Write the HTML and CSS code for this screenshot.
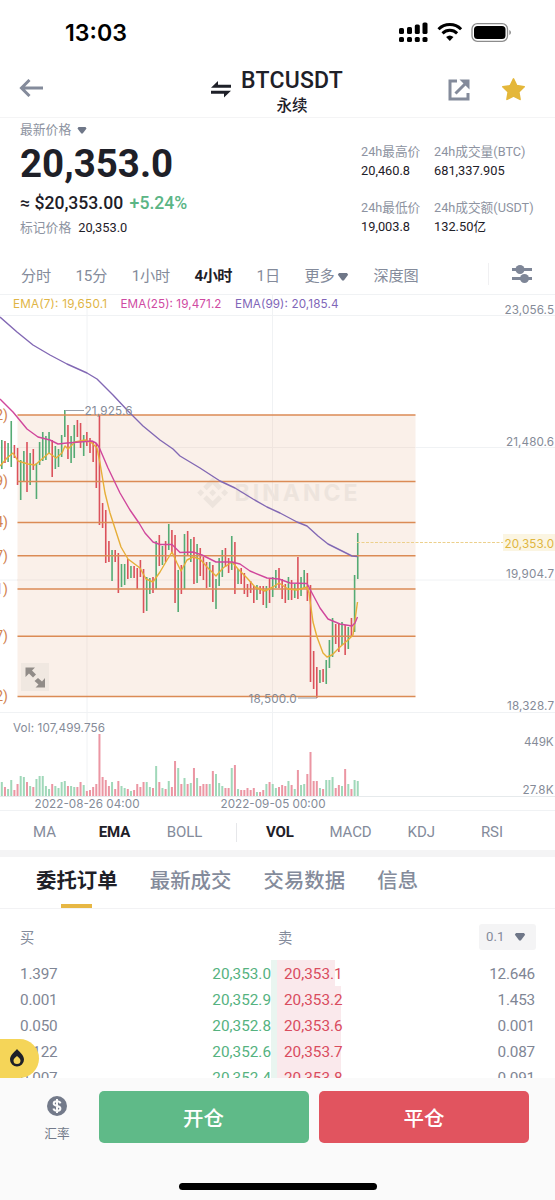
FILE: index.html
```html
<!DOCTYPE html>
<html lang="zh-CN">
<head>
  <meta charset="UTF-8">
  <meta name="viewport" content="width=device-width, initial-scale=1.0">
  <title>BTCUSDT 永续</title>
  <link rel="stylesheet" href="styles.css">
</head>
<body>
  <div class="app">
    <div class="status-bar">
      <span class="time">13:03</span>
      <svg class="status-icons" width="116" height="22" viewBox="0 0 116 22">
        <g>
          <rect x="1" y="8" width="5" height="6" rx="1.6"/><rect x="9" y="7" width="5" height="7" rx="1.6"/>
          <rect x="16.800" y="4.500" width="5" height="9.500" rx="1.600"/><rect x="24.500" y="2.500" width="5" height="11.500" rx="1.600"/>
          <rect x="1" y="17" width="5" height="5" rx="1.6"/><rect x="9" y="17" width="5" height="5" rx="1.6"/>
          <rect x="16.800" y="17" width="5" height="5" rx="1.6"/><rect x="24.500" y="17" width="5" height="5" rx="1.6"/>
        </g>
        <g fill="none" stroke="#000" stroke-width="3">
          <path d="M40.500 9.200a16 16 0 0 1 22.600 0"/>
          <path d="M44.500 13.300a10.500 10.500 0 0 1 14.600 0"/>
        </g>
        <path d="M51.800 21l-3.700-3.900a5.600 5.600 0 0 1 7.400 0z"/>
        <rect x="74" y="3.700" width="35.500" height="17.600" rx="5.300" fill="none" stroke="#8c8c8c" stroke-width="1.300"/>
        <rect x="76" y="6" width="31.500" height="13" rx="3.500"/>
        <path d="M111.300 10v5a2.700 2.700 0 0 0 0-5z" fill="#8c8c8c"/>
      </svg>
    </div>

    <div class="header">
      <svg class="back" width="24" height="18" viewBox="0 0 24 18"><path d="M24 9H3M10.500 1L2.500 9l8 8" fill="none" stroke="#848b9b" stroke-width="3"/></svg>
      <svg class="swap" width="20" height="18" viewBox="0 0 20 18"><path d="M0 7.700L7 1v3.700h13v3zM0 10.700h20L13 17.500v-3.800H0z" fill="#1e2028"/></svg>
      <div class="pair">
        <h1>BTCUSDT</h1>
        <span>永续</span>
      </div>
      <svg class="share" width="22" height="22" viewBox="0 0 22 22"><path d="M9 2H2v18h18v-6" fill="none" stroke="#848b9b" stroke-width="3"/><path d="M7.500 14.500L17 5" stroke="#848b9b" stroke-width="3"/><path d="M11.500.5H21.500V10.500z" fill="#848b9b"/></svg>
      <svg class="star" width="25" height="25" viewBox="0 0 24 24"><path d="M12 1.800l3.100 6.500 7.200 1-5.200 5 1.200 7.200-6.300-3.300-6.300 3.300 1.200-7.200-5.200-5 7.200-1z" fill="#e4b73a" stroke="#e4b73a" stroke-width="1.500" stroke-linejoin="round"/></svg>
    </div>

    <div class="info">
      <div class="price-box">
        <div class="label">最新价格 <svg width="10" height="7" viewBox="0 0 10 7"><path d="M1.500 0h7L9.500 1.500 5.700 6.500H4.300L.5 1.500z" fill="#6f7788"/></svg></div>
        <div class="price">20,353.0</div>
        <div class="usd">≈ $20,353.00 <span class="up">+5.24%</span></div>
        <div class="mark"><span>标记价格</span>20,353.0</div>
      </div>
      <div class="stats">
        <div class="stat"><span>24h最高价</span><b>20,460.8</b></div>
        <div class="stat"><span>24h成交量(BTC)</span><b>681,337.905</b></div>
        <div class="stat"><span>24h最低价</span><b>19,003.8</b></div>
        <div class="stat"><span>24h成交额(USDT)</span><b>132.50亿</b></div>
      </div>
    </div>

    <div class="intervals">
      <span>分时</span>
      <span>15分</span>
      <span>1小时</span>
      <span class="active">4小时</span>
      <span>1日</span>
      <span class="more">更多 <svg width="12" height="8" viewBox="0 0 10 7"><path d="M1.500 0h7L9.500 1.500 5.700 6.500H4.300L.5 1.500z" fill="#6f7788"/></svg></span>
      <span>深度图</span>
      <div class="settings">
        <svg width="20" height="20" viewBox="0 0 20 20" fill="#7e8697"><rect y="4" width="20" height="3"/><rect y="13" width="20" height="3"/><circle cx="8" cy="5.500" r="4.500"/><circle cx="12.500" cy="14.500" r="4.500"/></svg>
      </div>
    </div>

    <svg class="chart" width="555" height="517" viewBox="0 294 555 517">
      <path class="grid" d="M0 294.500H555M0 315.500H555M0 447.500H555M0 580H555M0 712.500H555M0 810.500H555M87 294V796M272.500 294V796"/>
      <path class="axis" d="M0 796.500H555"/>
      <rect class="fib-area" x="17.500" y="415" width="398" height="281"/>
      <g class="watermark">
        <path transform="translate(197.200 477.200) scale(1.290)" d="M16.624 13.920l2.718 2.716-7.353 7.353-7.353-7.352 2.717-2.717 4.636 4.660 4.635-4.660zm4.637-4.636L24 12l-2.715 2.716L18.568 12l2.693-2.716zm-9.272 0l2.716 2.692-2.717 2.717L9.272 12l2.716-2.715zm-9.273 0L5.409 12l-2.692 2.692L0 12l2.716-2.716zM11.989.011l7.353 7.329-2.718 2.716-4.635-4.636-4.636 4.660-2.717-2.716 7.353-7.353z"/>
        <text x="234.500" y="501" textLength="123">BINANCE</text>
      </g>
      <path class="grid over" d="M17 447.500H415M17 580H415M87 415V696M272.500 415V696"/>
      <g id="volumes"></g>
      <g id="candles"></g>
      <path class="fib" d="M17.500 415H415.500M17.500 481.400H415.500M17.500 522.400H415.500M17.500 555.700H415.500M17.500 589H415.500M17.500 636.200H415.500M17.500 696.400H415.500"/>
      <polyline class="ema99" points="0,317 17,332 33,345 50,355 67,364 87,373 97,379 113,395 128,411 143,426 160,440 173,449 180,456 200,468 220,481 235,488 253,499 267,507 280,513 297,522 307,526 318,536 328,544 340,550 352,556 357.500,556.500"/>
      <polyline class="ema7" points="0,466 7,458 13,453 18,461 28,464 35,465 42,459 49,453 56,458 62,453 65,446 68,449 75,442 85,440 92,443 97,448 100,463 105,493 110,513 121,547 128,559 140,568 146,579 153,582 160,572 167,560 172,552 177,563 181,571 187,560 193,557 200,559 207,567 216,576 223,568 232,562 238,569 247,578 255,587 265,591 273,587 279,583 288,589 297,590 307,587 309,593 313,622 317,637 323,653 327,657 332,655 340,647 348,640 353,635 355,620 357.500,602"/>
      <polyline class="ema25" points="0,399 13,412 27,429 38,437 50,440 58,444 67,443 80,442 92,441 96,443 99,447 108,468 120,493 130,510 139,523 145,533 153,542 160,544.500 172,544.500 180,552.500 193,552 202,555 216,562 232,562 240,564 250,571 267,578 279,579 290,583 307,583.500 312,593 320,608 328,619 340,624 352,626 355,623 357.500,617"/>
      <path class="price-line" d="M357 542.500H503"/>
      <rect class="price-tag" x="503" y="534" width="52" height="17"/>
      <path class="pointer" d="M65 410.500H84M298 698H317"/>
      <g class="fib-label">
        <text x="8" y="419.500">2)</text>
        <text x="8" y="486">9)</text>
        <text x="8" y="527">4)</text>
        <text x="8" y="560.500">7)</text>
        <text x="8" y="593.500">1)</text>
        <text x="8" y="641">7)</text>
        <text x="8" y="701">2)</text>
      </g>
      <g class="ema-label">
        <text x="13" y="308.300" textLength="94" fill="#dfb545">EMA(7): 19,650.1</text>
        <text x="120.500" y="308.300" textLength="101" fill="#cf4aa2">EMA(25): 19,471.2</text>
        <text x="235" y="308.300" textLength="103.500" fill="#7f66b8">EMA(99): 20,185.4</text>
      </g>
      <g class="tick">
        <text x="504.500" y="313.500" textLength="49.500">23,056.5</text>
        <text x="506" y="445.600" textLength="48">21,480.6</text>
        <text x="504.500" y="548.200" textLength="49.500" class="last">20,353.0</text>
        <text x="506" y="578" textLength="48">19,904.7</text>
        <text x="507" y="710" textLength="47">18,328.7</text>
        <text x="524" y="745.600" textLength="29.500">449K</text>
        <text x="522.500" y="793.700" textLength="31">27.8K</text>
        <text x="84.500" y="415" textLength="48">21,925.6</text>
        <text x="248.500" y="703" textLength="48">18,500.0</text>
        <text x="13" y="731.500" textLength="92">Vol: 107,499.756</text>
        <text x="34.500" y="808" textLength="105">2022-08-26 04:00</text>
        <text x="220.500" y="808" textLength="105">2022-09-05 00:00</text>
      </g>
      <rect x="21" y="663" width="28" height="28" fill="#f0e8e1"/>
      <path d="M25.500 667.500h9.500l-3 3 4 4-3 3-4-4-3.500 3.500zM45 687.500h-9.500l3-3-4-3.500 3.500-3 4 3.500 3-3.500z" fill="#918c88"/>
    </svg>

    <div class="indicators">
      <span>MA</span>
      <span class="active">EMA</span>
      <span>BOLL</span>
      <i></i>
      <span class="active">VOL</span>
      <span>MACD</span>
      <span>KDJ</span>
      <span>RSI</span>
    </div>

    <div class="tabs">
      <span class="active">委托订单</span>
      <span>最新成交</span>
      <span>交易数据</span>
      <span>信息</span>
    </div>

    <div class="book">
      <div class="book-head">
        <span>买</span>
        <span>卖</span>
        <div class="step">0.1 <svg width="12" height="8" viewBox="0 0 10 7"><path d="M1.500 0h7L9.500 1.500 5.700 6.500H4.300L.5 1.500z" fill="#6f7788"/></svg></div>
      </div>
      <div id="rows"></div>
      <div class="hot">
        <svg width="16" height="18" viewBox="0 0 16 18"><path d="M8 0c2.500 3 7 6 7 10.500a7 7 0 0 1-14 0C1 6 5.500 3 8 0zm0 7c-1.300 1.500-3.500 2.500-3.500 4.600a3.500 3.500 0 0 0 7 0C11.500 9.500 9.300 8.500 8 7z" fill="#1e2028" fill-rule="evenodd"/></svg>
      </div>
    </div>

    <div class="footer">
      <div class="rate">
        <svg width="20" height="20" viewBox="0 0 20 20"><circle cx="10" cy="10" r="10" fill="#737a8a"/><path d="M13.500 7.300C13 5.900 11.700 5.300 10 5.300c-2 0-3.300.9-3.300 2.300 0 3.300 6.700 1.500 6.700 4.800 0 1.500-1.400 2.400-3.400 2.400-1.900 0-3.200-.8-3.600-2.300M10 3v14" fill="none" stroke="#fafafa" stroke-width="2"/></svg>
        <span>汇率</span>
      </div>
      <button class="open-btn">开仓</button>
      <button class="close-btn">平仓</button>
      <div class="home-bar"></div>
    </div>
  </div>
  <script src="script.js"></script>
</body>
</html>
```

FILE: styles.css
```css
* {
  margin: 0;
  padding: 0;
  box-sizing: border-box;
}

body {
  background-color: #fff;
  font-family: Roboto, "Noto Sans CJK SC", sans-serif;
  color: #1e2028;
}

svg {
  flex-shrink: 0;
}

.app {
  width: 555px;
  height: 1200px;
  overflow: hidden;
  white-space: nowrap;
}

.status-bar {
  height: 59px;
  display: flex;
  justify-content: space-between;
  padding: 20px 41px 0 65px;
}

.time {
  font-family: Inter, sans-serif;
  font-size: 23.2px;
  font-weight: 600;
  line-height: 27px;
  color: #000;
}

.header {
  height: 59px;
  display: flex;
  align-items: flex-start;
  border-bottom: 1px solid #f4f4f5;
  padding-left: 19px;
}

.back {
  margin-top: 20px;
}

.swap {
  margin: 21px 10px 0 168px;
}

.pair {
  width: 102px;
  text-align: center;
  padding-top: 8px;
}

.pair h1 {
  font-size: 23px;
  font-weight: 500;
  line-height: 28px;
  letter-spacing: 0.2px;
}

.pair span {
  display: block;
  font-size: 15.5px;
  font-weight: 500;
  line-height: 22px;
}

.share {
  margin: 20px 31px 0 105px;
}

.star {
  margin-top: 18px;
}

.info {
  height: 137px;
  display: flex;
}

.price-box {
  width: 361px;
  padding-left: 20px;
}

.label {
  font-size: 12.8px;
  line-height: 23px;
  color: #8d93a1;
}

.label svg {
  margin-left: 3px;
}

.price {
  font-size: 38.5px;
  font-weight: 700;
  line-height: 46px;
}

.usd {
  font-size: 17.6px;
  font-weight: 500;
  line-height: 33px;
}

.up {
  color: #5bb585;
  margin-left: 2px;
}

.mark {
  font-size: 12.8px;
  line-height: 15px;
}

.mark span {
  color: #8d93a1;
  margin-right: 7px;
}

.stats {
  display: grid;
  grid-template-columns: 73px auto;
  grid-template-rows: 56px 56px;
  padding-top: 24px;
}

.stat span {
  display: block;
  font-size: 12.7px;
  line-height: 19px;
  color: #8d93a1;
}

.stat b {
  display: block;
  font-size: 12.8px;
  font-weight: 400;
  line-height: 20px;
}

.intervals {
  height: 39px;
  display: flex;
  align-items: center;
  gap: 24.5px;
  padding: 0 0 1px 21px;
  font-size: 15.2px;
  letter-spacing: -0.2px;
  color: #848b9b;
}

.intervals .active {
  color: #1e2028;
  font-weight: 700;
  letter-spacing: -0.5px;
}

.more svg {
  margin-left: -1px;
}

.settings {
  margin-left: auto;
  display: flex;
  align-items: center;
  height: 22px;
  width: 67px;
  padding-left: 23px;
  border-left: 1px solid #f0f0f2;
}

/* K线图 */
.chart {
  display: block;
}

.grid {
  fill: none;
  stroke: #f0f2f4;
  stroke-width: 1;
}

.grid.over {
  stroke: #efe5df;
}

.axis {
  stroke: #e6eaec;
}

.fib-area {
  fill: #faf0e9;
}

.fib {
  stroke: #db8b55;
  stroke-width: 1.5;
}

.fib-label text {
  font-family: Roboto, sans-serif;
  font-size: 14px;
  fill: #d2824f;
  text-anchor: end;
}

.watermark {
  fill: #ede4dd;
}

.watermark text {
  font-family: Inter, sans-serif;
  font-size: 23px;
  font-weight: 700;
}

.ema7, .ema25, .ema99 {
  fill: none;
  stroke-width: 1.4;
  stroke-linejoin: round;
}

.ema7 {
  stroke: #e6ae38;
}

.ema25 {
  stroke: #d0479c;
}

.ema99 {
  stroke: #8268b4;
}

.price-line {
  stroke: #ecd08c;
  stroke-dasharray: 3 1.5;
}

.price-tag {
  fill: #fbf5e2;
}

.pointer {
  stroke: #9aa0aa;
}

.ema-label text, .tick text {
  font-family: Inter, sans-serif;
  font-size: 11.7px;
}

.tick text {
  fill: #858b98;
}

.tick .last {
  fill: #e0b63f;
}

.candle {
  width: 1.6px;
}

.rise {
  fill: #55ab74;
}

.fall {
  fill: #db525b;
}

.vol-rise {
  fill: #a0d8b9;
}

.vol-fall {
  fill: #eb96a3;
}

.indicators {
  height: 46px;
  display: flex;
  align-items: center;
  padding: 3px 0 0 9.5px;
  border-bottom: 7px solid #f4f4f5;
  font-size: 15px;
  letter-spacing: -0.1px;
  color: #848b9b;
}

.indicators span {
  width: 70px;
  text-align: center;
}

.indicators i {
  width: 1px;
  height: 19px;
  margin: 0 8px 0 16px;
  background-color: #e6e7ea;
}

.indicators i ~ span {
  width: 70.7px;
}

.indicators .active {
  color: #1e2028;
  font-weight: 700;
}

.tabs {
  height: 52px;
  display: flex;
  gap: 32.2px;
  padding-left: 36px;
  border-bottom: 1px solid #f2f2f4;
  font-size: 20.4px;
  font-weight: 500;
  line-height: 49px;
  color: #848b9b;
}

.tabs .active {
  color: #1e2028;
  font-weight: 700;
  position: relative;
}

.tabs .active::after {
  content: "";
  position: absolute;
  left: 25px;
  bottom: 0;
  width: 31px;
  height: 4px;
  background-color: #e7b744;
}

.book {
  height: 169px;
  overflow: hidden;
  position: relative;
}

.book-head {
  height: 51px;
  display: grid;
  grid-template-columns: 258px 201px 57px;
  align-items: center;
  padding: 4px 0 0 20px;
  font-size: 14.3px;
  color: #848b9b;
}

.step {
  height: 26px;
  display: flex;
  align-items: center;
  justify-content: space-between;
  padding: 0 10px 0 7px;
  font-size: 13.2px;
  background-color: #f4f4f5;
  border-radius: 3px;
}

.row {
  height: 26px;
  display: flex;
  line-height: 29px;
  font-size: 15.3px;
  color: #7f8695;
}

.bid, .ask {
  display: flex;
  justify-content: space-between;
}

.bid {
  width: 277px;
  padding: 0 6px 0 20px;
  background: linear-gradient(#e9f5f0, #e9f5f0) no-repeat right / 6px 100%;
}

.bid span, .ask span {
  letter-spacing: -0.2px;
}

.bid b {
  font-weight: 400;
  color: #55b27f;
}

.ask {
  width: 278px;
  padding: 0 20px 0 7px;
  background: linear-gradient(#fae9ec, #fae9ec) no-repeat left / 64px 100%;
}

.ask b {
  font-weight: 400;
  color: #d94c5e;
}

.row:first-child .ask {
  background-size: 58px 100%;
}

.hot {
  position: absolute;
  left: 0;
  bottom: 0;
  width: 39px;
  height: 39px;
  padding: 10px 0 0 9px;
  background-color: #f5d558;
  border-radius: 0 20px 20px 0;
}

.footer {
  height: 122px;
  display: grid;
  grid-template-columns: 83px 210px 210px;
  grid-template-rows: 52px auto;
  column-gap: 10.5px;
  padding: 13px 0 0 5px;
  background-color: #fafafa;
}

.rate {
  display: flex;
  flex-direction: column;
  align-items: center;
  width: 104px;
  padding-top: 5px;
  font-size: 12.7px;
  line-height: 17px;
  gap: 9px;
  color: #737a8a;
}

.footer button {
  border: none;
  border-radius: 5px;
  font-family: inherit;
  font-size: 20.5px;
  font-weight: 500;
  color: #fff;
}

.open-btn {
  background-color: #5fba88;
}

.close-btn {
  background-color: #e1545f;
}

.home-bar {
  grid-column: 1 / -1;
  width: 198px;
  height: 7px;
  margin: 40px 0 0 174px;
  border-radius: 4px;
  background-color: #000;
}
```

FILE: script.js
```javascript
// [涨跌, 最高点, 最低点, 成交量高度]
const data = [
  ['G', 440, 469, 14], ['R', 441, 463, 9], ['G', 443, 462, 7], ['G', 421, 467, 16], ['R', 445, 458, 6],
  ['R', 448, 485, 12], ['G', 460, 500, 20], ['G', 451, 482, 19], ['R', 442, 492, 14], ['G', 453, 485, 10],
  ['R', 449, 470, 9], ['G', 463, 499, 17], ['G', 442, 465, 20], ['G', 432, 461, 20], ['G', 436, 460, 10],
  ['G', 432, 454, 7], ['R', 440, 477, 12], ['G', 446, 469, 10], ['G', 449, 467, 8], ['G', 435, 457, 14],
  ['G', 410, 437, 15], ['R', 425, 459, 10], ['G', 436, 463, 10], ['G', 425, 458, 9], ['R', 420, 437, 9],
  ['R', 423, 448, 14], ['G', 435, 456, 11], ['R', 432, 446, 5], ['R', 438, 453, 6], ['R', 442, 462, 9],
  ['R', 443, 488, 12], ['R', 415, 525, 62], ['R', 503, 528, 19], ['R', 510, 563, 16], ['R', 541, 562, 10],
  ['G', 550, 581, 14], ['R', 550, 562, 7], ['R', 553, 593, 15], ['G', 564, 587, 10], ['G', 564, 585, 8],
  ['R', 559, 579, 7], ['G', 566, 578, 5], ['R', 566, 578, 6], ['R', 568, 589, 12], ['R', 560, 577, 9],
  ['R', 569, 613, 14], ['G', 577, 611, 14], ['G', 578, 594, 9], ['R', 577, 593, 8], ['G', 541, 589, 30],
  ['R', 535, 566, 14], ['G', 546, 565, 8], ['R', 541, 562, 7], ['G', 524, 550, 15], ['R', 530, 553, 9],
  ['R', 535, 603, 35], ['G', 570, 612, 28], ['R', 565, 594, 12], ['G', 534, 589, 18], ['R', 531, 555, 12],
  ['G', 539, 562, 13], ['R', 537, 584, 28], ['G', 544, 583, 18], ['R', 548, 576, 10], ['R', 557, 580, 12],
  ['R', 562, 588, 12], ['G', 562, 587, 12], ['R', 565, 602, 25], ['G', 579, 609, 22], ['G', 558, 586, 13],
  ['G', 550, 577, 10], ['R', 548, 567, 8], ['R', 558, 573, 8], ['G', 536, 570, 28], ['R', 542, 594, 31],
  ['G', 569, 584, 7], ['R', 568, 584, 6], ['R', 573, 594, 6], ['R', 584, 597, 8], ['R', 581, 593, 6],
  ['R', 586, 603, 8], ['G', 585, 600, 4], ['R', 586, 594, 4], ['R', 586, 605, 6], ['G', 586, 608, 12],
  ['R', 579, 603, 14], ['G', 577, 597, 12], ['G', 570, 588, 8], ['R', 568, 588, 9], ['R', 579, 599, 11],
  ['R', 584, 603, 10], ['G', 577, 600, 15], ['R', 580, 600, 11], ['G', 584, 598, 7], ['R', 557, 599, 26],
  ['G', 577, 596, 11], ['G', 570, 588, 12], ['R', 573, 601, 22], ['R', 585, 682, 44], ['R', 651, 689, 15],
  ['R', 667, 698, 15], ['G', 670, 683, 8], ['R', 669, 682, 7], ['G', 660, 684, 16], ['G', 640, 668, 16],
  ['G', 618, 657, 19], ['R', 624, 644, 8], ['R', 624, 652, 11], ['G', 622, 645, 10], ['R', 625, 655, 27],
  ['G', 627, 649, 12], ['R', 618, 636, 7], ['G', 575, 632, 16], ['G', 533, 579, 15]
];

// 绘制K线和成交量
let candles = '';
let volumes = '';
data.forEach(([type, high, low, vol], i) => {
  const x = 1.8 + i * 3.15;
  const name = type === 'G' ? 'rise' : 'fall';
  candles += `<rect class="candle ${name}" x="${x - 0.8}" y="${high}" height="${low - high}"/>`;
  volumes += `<rect class="vol-${name}" x="${x - 1}" y="${796 - vol}" width="2" height="${vol}"/>`;
});
document.getElementById('candles').innerHTML = candles;
document.getElementById('volumes').innerHTML = volumes;

// 委托订单
const orders = [
  ['1.397', '20,353.0', '20,353.1', '12.646'],
  ['0.001', '20,352.9', '20,353.2', '1.453'],
  ['0.050', '20,352.8', '20,353.6', '0.001'],
  ['0.122', '20,352.6', '20,353.7', '0.087'],
  ['0.007', '20,352.4', '20,353.8', '0.091']
];
document.getElementById('rows').innerHTML = orders.map(o => `
  <div class="row">
    <div class="bid"><span>${o[0]}</span><b>${o[1]}</b></div>
    <div class="ask"><b>${o[2]}</b><span>${o[3]}</span></div>
  </div>`).join('');
```
